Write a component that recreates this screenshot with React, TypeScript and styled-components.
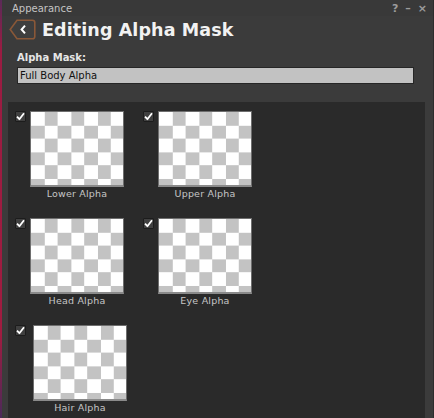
import React from "react";
import styled, { createGlobalStyle } from "styled-components";

const GlobalStyle = createGlobalStyle`
  html, body {
    margin: 0;
    padding: 0;
    background: #2f2230;
  }
  * {
    box-sizing: border-box;
  }
`;

const FONT = `"DejaVu Sans", "Liberation Sans", sans-serif`;

const Desktop = styled.div`
  width: 434px;
  height: 418px;
  display: flex;
  background: linear-gradient(180deg, #5a2a58 0%, #9a1c42 12%, #a01c40 80%, #4a2a5a 100%);
  overflow: hidden;
`;

const Window = styled.div`
  flex: 1;
  margin-left: 2px;
  display: flex;
  flex-direction: column;
  background: #3b3b3b;
  border-right: 1px solid #2c2c2c;
  font-family: ${FONT};
`;

const TitleBar = styled.div`
  height: 16px;
  display: flex;
  align-items: center;
  padding: 0 6px 0 10px;
  background: #393939;
  color: #c4c4c4;
  font-size: 10px;
`;

const TitleText = styled.span`
  flex: 1;
`;

const TitleButtons = styled.div`
  display: flex;
  gap: 7px;
  color: #9c9c9c;
  font-size: 11px;
  font-weight: bold;
`;

const Header = styled.div`
  display: flex;
  align-items: center;
  gap: 6px;
  padding: 3px 0 0 7px;
  height: 24px;
`;

const BackButton = styled.button`
  width: 27px;
  height: 21px;
  padding: 0;
  border: none;
  background: none;
  display: flex;
`;

const Heading = styled.h1`
  margin: 0;
  color: #f2f2f2;
  font-size: 17.5px;
  font-weight: bold;
  letter-spacing: 0.1px;
`;

const Field = styled.div`
  display: flex;
  flex-direction: column;
  gap: 4px;
  padding: 12px 19px 0 15px;
`;

const FieldLabel = styled.label`
  color: #e6e6e6;
  font-size: 10px;
  font-weight: bold;
`;

const TextInput = styled.div`
  height: 17px;
  display: flex;
  align-items: center;
  padding-left: 2px;
  background: #c2c2c2;
  border: 1px solid #262626;
  color: #111;
  font-size: 10px;
`;

const Panel = styled.div`
  flex: 1;
  margin: 18px 8px 0 6px;
  background: #2a2a2a;
  padding: 9px 0 0 7px;
  display: grid;
  grid-template-columns: repeat(2, 108px);
  grid-auto-rows: 93px;
  column-gap: 20px;
  row-gap: 14px;
  align-content: start;
`;

const Item = styled.div`
  display: flex;
  gap: 4px;
`;

const CheckBox = styled.div`
  width: 11px;
  height: 11px;
  flex: none;
  display: flex;
  align-items: center;
  justify-content: center;
  background: #404040;
  border: 1px solid #1c1c1c;
  border-radius: 1px;
`;

const Swatch = styled.div<{ shift?: number }>`
  display: flex;
  flex-direction: column;
  align-items: center;
  gap: 1px;
  margin-left: ${({ shift }) => shift || 0}px;
`;

const Thumb = styled.div`
  width: 94px;
  height: 76px;
  border: 1px solid #6e6e6e;
  border-bottom: 2px solid #8a8a8a;
  background-color: #fff;
  background-image: conic-gradient(#c3c3c3 25%, #fff 0 50%, #c3c3c3 0 75%, #fff 0);
  background-size: 26.6px 26.6px;
`;

const Caption = styled.span`
  color: #c6c6c6;
  font-size: 9.5px;
  letter-spacing: 0.2px;
`;

const Check = () => (
  <svg width="9" height="9" viewBox="0 0 9 9">
    <path d="M1 4.6 L3.4 7.2 L8 1.2" fill="none" stroke="#fff" strokeWidth="1.8" strokeLinejoin="round" />
  </svg>
);

const BackIcon = () => (
  <svg width="27" height="21" viewBox="0 0 27 21">
    <path
      d="M1.2 10.5 L8 1.2 H23.5 Q25.8 1.2 25.8 3.5 V17.5 Q25.8 19.8 23.5 19.8 H8 Z"
      fill="#3e3e3e"
      stroke="#8a5838"
      strokeWidth="1.6"
    />
    <polyline points="16,6.6 12.6,10.5 16,14.4" fill="none" stroke="#fff" strokeWidth="2" />
  </svg>
);

const masks = [
  { name: "Lower Alpha" },
  { name: "Upper Alpha" },
  { name: "Head Alpha" },
  { name: "Eye Alpha" },
  { name: "Hair Alpha", shift: 3 },
];

export default function App() {
  return (
    <>
      <GlobalStyle />
      <Desktop>
        <Window>
          <TitleBar>
            <TitleText>Appearance</TitleText>
            <TitleButtons>
              <span>?</span>
              <span>–</span>
              <span>×</span>
            </TitleButtons>
          </TitleBar>
          <Header>
            <BackButton>
              <BackIcon />
            </BackButton>
            <Heading>Editing Alpha Mask</Heading>
          </Header>
          <Field>
            <FieldLabel>Alpha Mask:</FieldLabel>
            <TextInput>Full Body Alpha</TextInput>
          </Field>
          <Panel>
            {masks.map((m) => (
              <Item key={m.name}>
                <CheckBox>
                  <Check />
                </CheckBox>
                <Swatch shift={m.shift}>
                  <Thumb />
                  <Caption>{m.name}</Caption>
                </Swatch>
              </Item>
            ))}
          </Panel>
        </Window>
      </Desktop>
    </>
  );
}
